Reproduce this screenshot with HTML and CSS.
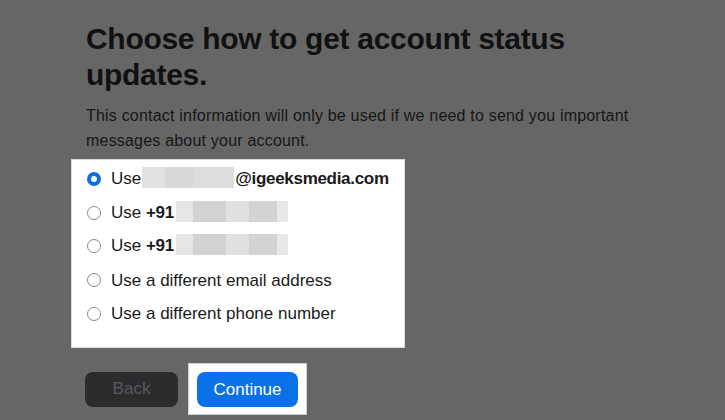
FILE: index.html
```html
<!DOCTYPE html>
<html>
<head>
<meta charset="utf-8">
<link rel="stylesheet" href="styles.css">
</head>
<body>
<main class="page">
  <h1 class="title">Choose how to get account status updates.</h1>
  <p class="desc">This contact information will only be used if we need to send you important messages about your account.</p>
  <div class="options">
    <label class="opt"><span class="radio on"></span><span class="txt">Use<span class="blur b1"></span><b class="med">@igeeksmedia.com</b></span></label>
    <label class="opt"><span class="radio"></span><span class="txt">Use <b class="med">+91</b><span class="blur b2"></span></span></label>
    <label class="opt"><span class="radio"></span><span class="txt">Use <b class="med">+91</b><span class="blur b2"></span></span></label>
    <label class="opt"><span class="radio"></span><span class="txt">Use a different email address</span></label>
    <label class="opt"><span class="radio"></span><span class="txt">Use a different phone number</span></label>
  </div>
  <div class="actions">
    <button class="btn back">Back</button>
    <div class="hl"><button class="btn cont">Continue</button></div>
  </div>
</main>
</body>
</html>
```
FILE: styles.css
```css
html, body { margin: 0; padding: 0; }
body {
  background: #666666;
  width: 725px;
  height: 420px;
  overflow: hidden;
  font-family: "Liberation Sans", Arial, sans-serif;
  color: #141414;
}
.page { padding: 21px 0 0 86px; }
.title {
  margin: 0;
  width: 500px;
  font-size: 30px;
  line-height: 36px;
  font-weight: bold;
  letter-spacing: -0.3px;
  color: #111;
}
.desc {
  margin: 10px 0 0;
  width: 600px;
  font-size: 16px;
  line-height: 25px;
  letter-spacing: 0.2px;
  color: #161616;
}
.options {
  margin: 6px 0 0 -15px;
  width: 317px;
  height: 185px;
  background: #fff;
  border: 1px solid #d9d9d9;
  padding: 2px 0 0 15px;
}
.opt {
  display: flex;
  align-items: center;
  height: 33.75px;
  font-size: 17px;
  color: #1a1a1a;
}
.radio {
  width: 14px;
  height: 14px;
  border: 1px solid #8a8a8a;
  border-radius: 50%;
  box-sizing: border-box;
  margin: 0 10px 0 0;
  background: #fff;
  flex: none;
}
.radio.on {
  border: 4.5px solid #0a6fe0;
  background: #fff;
}
.txt { white-space: nowrap; line-height: 21px; }
.med { font-weight: bold; letter-spacing: -0.3px; }
.blur { display: inline-block; vertical-align: middle; height: 21px; position: relative; top: -2px; }
.b1 { width: 92px; margin: 0 1px 0 1px; background: linear-gradient(90deg, #e2e2e2 0 25%, #d8d8d8 25% 55%, #dddddd 55% 100%); }
.b2 { width: 112px; margin-left: 2px; background: linear-gradient(90deg, #e6e6e6 0 15%, #d2d2d2 15% 45%, #e0e0e0 45% 65%, #d3d3d3 65% 90%, #e8e8e8 90% 100%); }
.actions {
  display: flex;
  align-items: center;
  margin-top: 15px;
  margin-left: -1px;
}
.btn {
  font-family: "Liberation Sans", Arial, sans-serif;
  font-size: 17px;
  height: 35px;
  border: none;
  border-radius: 8px;
  padding: 0;
}
.back { width: 93px; background: #2c2c2e; color: #58585a; }
.hl {
  margin-left: 10px;
  background: #fff;
  padding: 8px 8px 7px 8px;
  border: 1px solid #d0d0d0;
}
.cont { width: 101px; background: #0a71e6; color: #fff; display: block; }
```
